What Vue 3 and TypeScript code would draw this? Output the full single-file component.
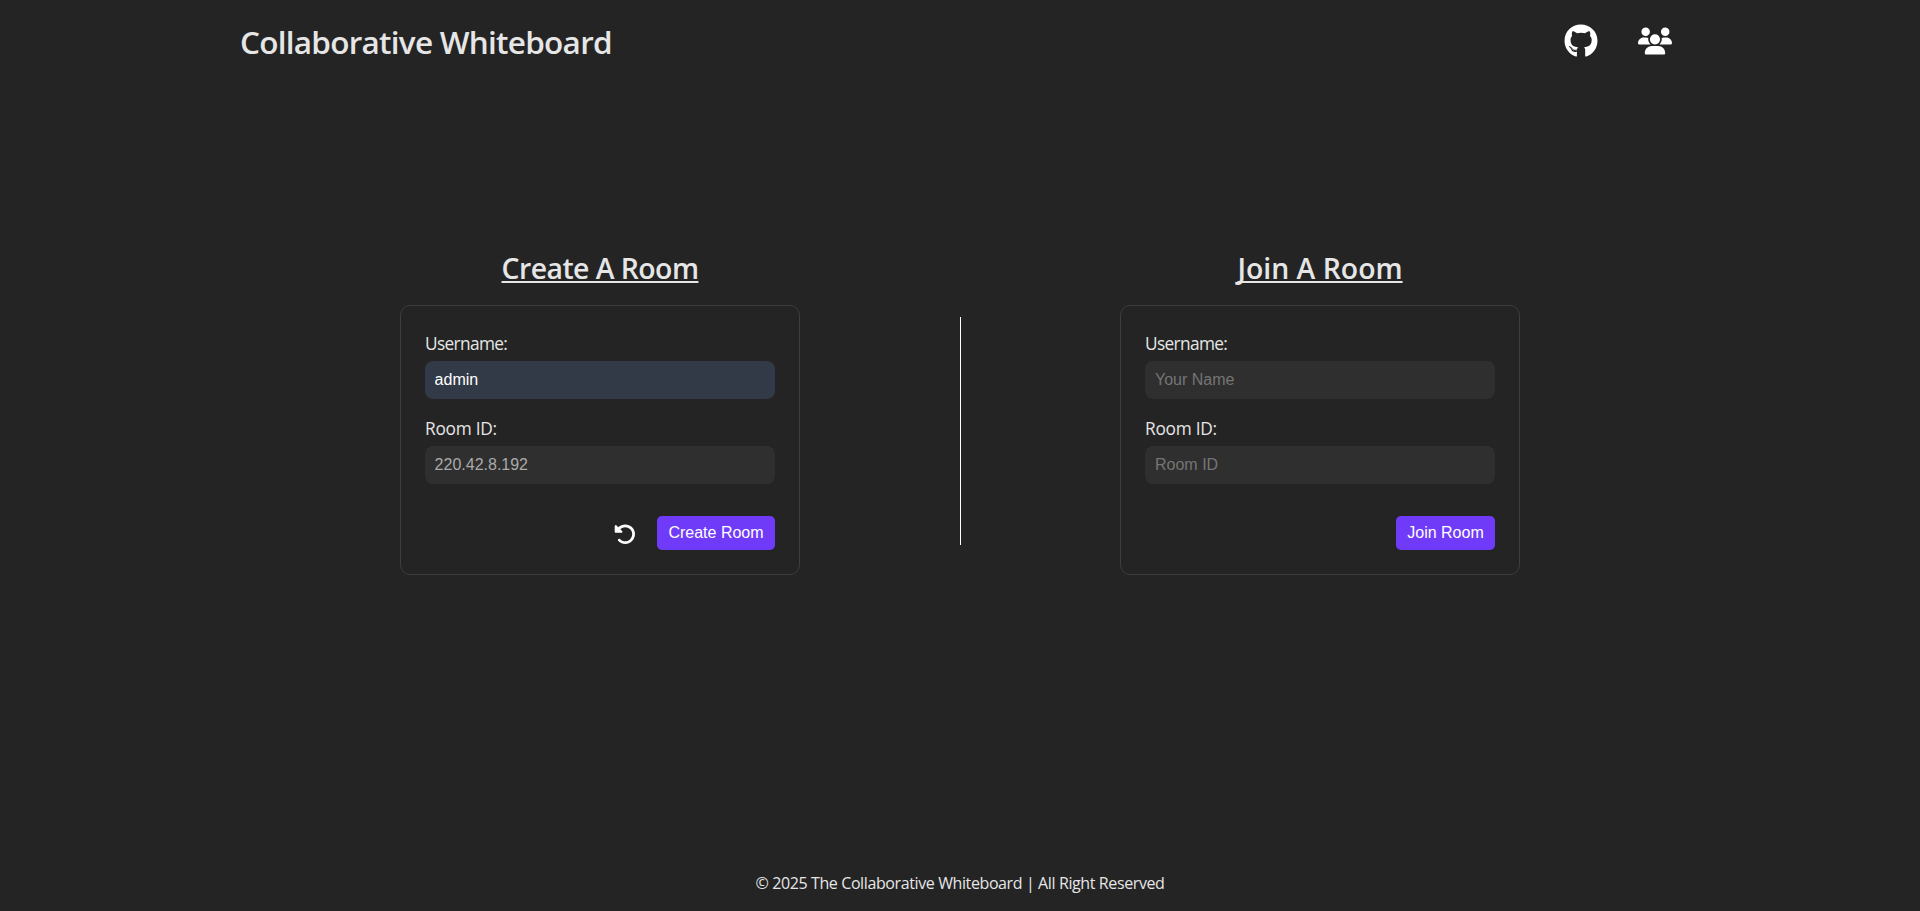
<script setup lang="ts">
import { ref } from 'vue'

const createName = ref<string>('admin')
const createRoomId = ref<string>('220.42.8.192')
const joinName = ref<string>('')
const joinRoomId = ref<string>('')

function regenerateRoomId(): void {
  createRoomId.value = Array.from({ length: 4 }, () => Math.floor(Math.random() * 256)).join('.')
}
</script>

<template>
  <div class="page">
    <header class="header">
      <h1 class="brand">Collaborative Whiteboard</h1>
      <nav class="links">
        <a class="link" aria-label="GitHub">
          <svg viewBox="0 0 496 512"><path d="M165.9 397.4c0 2-2.3 3.6-5.2 3.6-3.3.3-5.6-1.3-5.6-3.6 0-2 2.3-3.6 5.2-3.6 3-.3 5.6 1.3 5.6 3.6zm-31.1-4.5c-.7 2 1.3 4.3 4.3 4.9 2.6 1 5.6 0 6.2-2s-1.3-4.3-4.3-5.2c-2.6-.7-5.5.3-6.2 2.3zm44.2-1.7c-2.9.7-4.9 2.6-4.6 4.9.3 2 2.9 3.3 5.9 2.6 2.9-.7 4.9-2.6 4.6-4.6-.3-1.9-3-3.2-5.9-2.9zM244.8 8C106.1 8 0 113.3 0 252c0 110.9 69.8 205.8 169.5 239.2 12.8 2.3 17.3-5.6 17.3-12.1 0-6.2-.3-40.4-.3-61.4 0 0-70 15-84.7-29.8 0 0-11.4-29.1-27.8-36.6 0 0-22.9-15.7 1.6-15.4 0 0 24.9 2 38.6 25.8 21.9 38.6 58.6 27.5 72.9 20.9 2.3-16 8.8-27.1 16-33.7-55.9-6.2-112.3-14.3-112.3-110.5 0-27.5 7.6-41.3 23.6-58.9-2.6-6.5-11.1-33.3 2.6-67.9 20.9-6.5 69 27 69 27 20-5.6 41.5-8.5 62.8-8.5s42.8 2.9 62.8 8.5c0 0 48.1-33.6 69-27 13.7 34.7 5.2 61.4 2.6 67.9 16 17.7 25.8 31.5 25.8 58.9 0 96.5-58.9 104.2-114.8 110.5 9.2 7.9 17 22.9 17 46.4 0 33.7-.3 75.4-.3 83.6 0 6.5 4.6 14.4 17.3 12.1C428.2 457.8 496 362.9 496 252 496 113.3 383.5 8 244.8 8zM97.2 352.9c-1.3 1-1 3.3.7 5.2 1.6 1.6 3.9 2.3 5.2 1 1.3-1 1-3.3-.7-5.2-1.6-1.6-3.9-2.3-5.2-1zm-10.8-8.1c-.7 1.3.3 2.9 2.3 3.9 1.6 1 3.6.7 4.3-.7.7-1.3-.3-2.9-2.3-3.9-2-.6-3.6-.3-4.3.7zm32.4 35.6c-1.6 1.3-1 4.3 1.3 6.2 2.3 2.3 5.2 2.6 6.5 1 1.3-1.3.7-4.3-1.3-6.2-2.2-2.3-5.2-2.6-6.5-1zm-11.4-14.7c-1.6 1-1.6 3.6 0 5.9 1.6 2.3 4.3 3.3 5.6 2.3 1.6-1.3 1.6-3.9 0-6.2-1.4-2.3-4-3.3-5.6-2z" /></svg>
        </a>
        <a class="link" aria-label="Members">
          <svg viewBox="0 0 640 512"><path d="M144 0a80 80 0 1 1 0 160A80 80 0 1 1 144 0zM512 0a80 80 0 1 1 0 160A80 80 0 1 1 512 0zM0 298.7C0 239.8 47.8 192 106.7 192h42.7c15.9 0 31 3.5 44.6 9.7c-1.3 7.2-1.9 14.7-1.9 22.3c0 38.2 16.8 72.5 43.3 96c-.2 0-.4 0-.7 0H21.3C9.6 320 0 310.4 0 298.7zM405.3 320c-.2 0-.4 0-.7 0c26.6-23.5 43.3-57.8 43.3-96c0-7.6-.7-15-1.9-22.3c13.6-6.3 28.7-9.7 44.6-9.7h42.7C592.2 192 640 239.8 640 298.7c0 11.8-9.6 21.3-21.3 21.3H405.3zM224 224a96 96 0 1 1 192 0 96 96 0 1 1 -192 0zM128 485.3C128 411.7 187.7 352 261.3 352H378.7C452.3 352 512 411.7 512 485.3c0 14.7-11.9 26.7-26.7 26.7H154.7c-14.7 0-26.7-11.9-26.7-26.7z" /></svg>
        </a>
      </nav>
    </header>

    <main class="rooms">
      <section class="room">
        <h2 class="title title-create">Create A Room</h2>
        <form class="card" @submit.prevent>
          <label class="field">
            <span class="label label-name">Username:</span>
            <input v-model="createName" class="input filled" type="text" placeholder="Your Name" />
          </label>
          <label class="field">
            <span class="label label-id">Room ID:</span>
            <input v-model="createRoomId" class="input muted" type="text" disabled />
          </label>
          <div class="actions">
            <button class="refresh" type="button" aria-label="New room ID" @click="regenerateRoomId">
              <svg viewBox="0 0 512 512"><path d="M48.5 224H40c-13.3 0-24-10.7-24-24V72c0-9.7 5.8-18.5 14.8-22.2s19.3-1.7 26.2 5.2L98.6 96.6c87.6-86.5 228.7-86.2 315.8 1c87.5 87.5 87.5 229.3 0 316.8s-229.3 87.5-316.8 0c-12.5-12.5-12.5-32.8 0-45.3s32.8-12.5 45.3 0c62.5 62.5 163.8 62.5 226.3 0s62.5-163.8 0-226.3c-62.2-62.2-162.7-62.5-225.3-1L185 183c6.9 6.9 8.9 17.2 5.2 26.2s-12.5 14.8-22.2 14.8H48.5z" /></svg>
            </button>
            <button class="submit submit-create" type="submit">Create Room</button>
          </div>
        </form>
      </section>

      <div class="divider"></div>

      <section class="room">
        <h2 class="title title-join">Join A Room</h2>
        <form class="card" @submit.prevent>
          <label class="field">
            <span class="label label-name">Username:</span>
            <input v-model="joinName" class="input" type="text" placeholder="Your Name" />
          </label>
          <label class="field">
            <span class="label label-id">Room ID:</span>
            <input v-model="joinRoomId" class="input" type="text" placeholder="Room ID" />
          </label>
          <div class="actions">
            <button class="submit submit-join" type="submit">Join Room</button>
          </div>
        </form>
      </section>
    </main>

    <footer class="footer"><span class="copyright">© 2025 The Collaborative Whiteboard | All Right Reserved</span></footer>
  </div>
</template>

<style>
body {
  margin: 0;
  background: #242424;
}
</style>

<style scoped>
.page {
  display: flex;
  flex-direction: column;
  height: 100vh;
  overflow: hidden;
  background: #242424;
  color: #e6e6e6;
  font-family: "Segoe UI", "Open Sans", "Noto Sans", sans-serif;
}

.page * {
  box-sizing: border-box;
}

.header {
  display: flex;
  align-items: center;
  justify-content: space-between;
  flex: none;
  width: 1440px;
  height: 82px;
  margin: 0 auto;
}

.brand {
  margin: 1px 0 0;
  font-size: 31.5px;
  line-height: 43px;
  font-weight: 600;
  letter-spacing: -0.74px;
  white-space: nowrap;
}

.links {
  display: flex;
  gap: 40px;
  padding-right: 8px;
}

.link {
  display: flex;
  color: #fff;
}

.link svg {
  width: 34px;
  height: 34px;
  fill: currentColor;
}

.rooms {
  display: flex;
  justify-content: center;
  width: 1440px;
  margin: 0 auto;
  padding-top: 166px;
  flex: 1;
}

.room {
  display: flex;
  flex-direction: column;
  align-items: center;
  width: 400px;
}

.title {
  margin: 0 0 17px;
  font-size: 28.4px;
  line-height: 40px;
  font-weight: 600;
  white-space: nowrap;
  text-decoration: underline;
  text-decoration-thickness: 2px;
  text-underline-offset: 2px;
  text-decoration-skip-ink: none;
}

.title-create {
  letter-spacing: -0.55px;
}

.card {
  display: flex;
  flex-direction: column;
  width: 400px;
  height: 270px;
  padding: 24px;
  border: 1px solid #3d3d3d;
  border-radius: 10px;
}

.field {
  display: flex;
  flex-direction: column;
  height: 85px;
}

.label {
  align-self: flex-start;
  height: 31px;
  font-size: 17.3px;
  line-height: 27px;
  white-space: nowrap;
}

.label-name {
  letter-spacing: -0.65px;
}

.label-id {
  letter-spacing: -0.25px;
}

.input {
  width: 350px;
  height: 38px;
  padding: 0 10px;
  border: 0;
  border-radius: 8px;
  outline: none;
  background: #2f2f2f;
  color: #fff;
  font-family: Arial, "Liberation Sans", sans-serif;
  font-size: 16px;
}

.input::placeholder {
  color: #757575;
}

.input.filled {
  padding-left: 9.6px;
  background: #323a48;
}

.input.muted {
  padding-left: 9.6px;
  color: #aaa;
}

.actions {
  display: flex;
  justify-content: flex-end;
  align-items: center;
  gap: 21px;
  height: 34px;
  margin-top: 16px;
}

.refresh {
  display: flex;
  margin-top: 2px;
  padding: 0;
  border: 0;
  background: none;
  color: #fff;
}

.refresh svg {
  width: 22.4px;
  height: 22.4px;
  fill: currentColor;
}

.submit {
  height: 34px;
  padding: 0;
  border: 0;
  border-radius: 5px;
  background: #6f3bf8;
  color: #fff;
  font-family: Arial, "Liberation Sans", sans-serif;
  font-size: 16px;
  white-space: nowrap;
}

.submit-create {
  width: 118px;
}

.submit-join {
  width: 99px;
}

.divider {
  width: 1px;
  height: 228px;
  margin: 69px 159px 0 160px;
  background: #fff;
}

.footer {
  display: flex;
  justify-content: center;
  flex: none;
  height: 40px;
  font-size: 16px;
  line-height: 24px;
  white-space: nowrap;
}

.copyright {
  letter-spacing: -0.39px;
}
</style>
